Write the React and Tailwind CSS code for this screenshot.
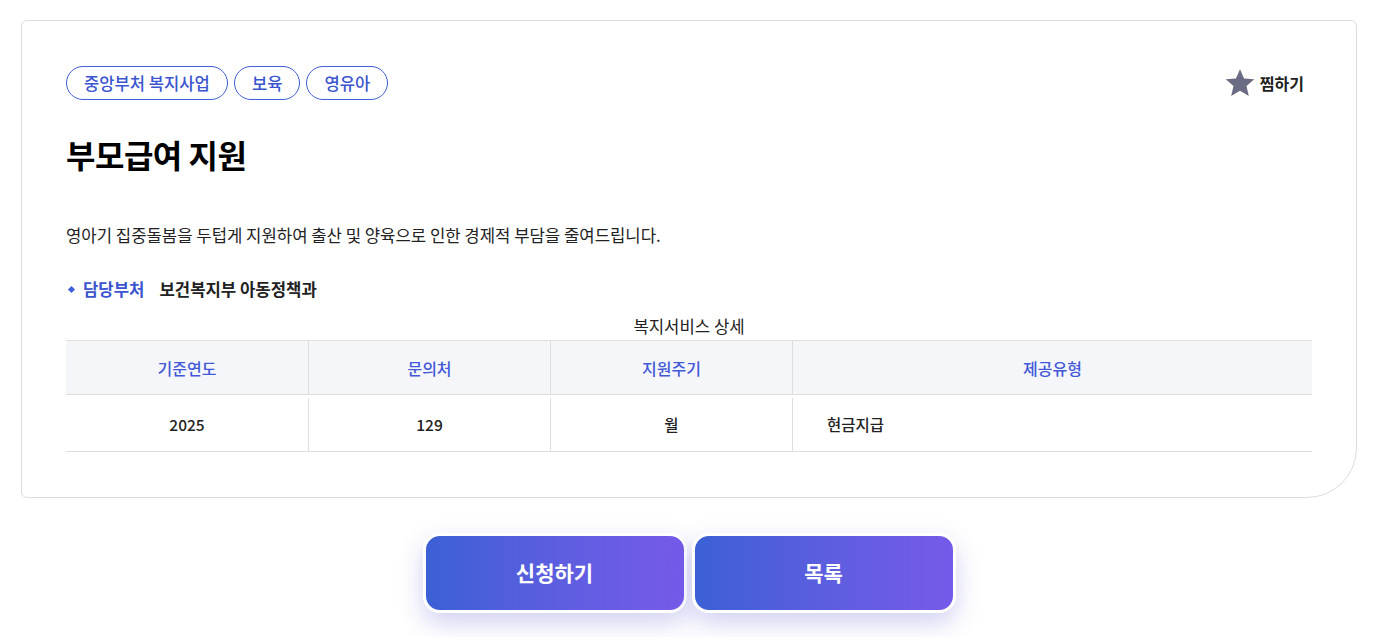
import React from 'react';

const tags = ['중앙부처 복지사업', '보육', '영유아'];

const columns = [
  { label: '기준연도', value: '2025', width: 'w-[242px]', align: 'center' },
  { label: '문의처', value: '129', width: 'w-[242px]', align: 'center' },
  { label: '지원주기', value: '월', width: 'w-[242px]', align: 'center' },
  { label: '제공유형', value: '현금지급', width: 'flex-1', align: 'left' },
];

const StarIcon = () => (
  <svg width="32" height="32" viewBox="0 0 24 24" className="text-[#696c82]">
    <path
      fill="currentColor"
      d="M12 1.6l3.05 7.02 7.6.66-5.77 5.02 1.73 7.44L12 17.8l-6.61 3.94 1.73-7.44-5.77-5.02 7.6-.66z"
    />
  </svg>
);

const App = () => {
  return (
    <div
      className="min-h-screen bg-white pt-[20px] text-[#111]"
      style={{ fontFamily: '"Noto Sans CJK KR", "Noto Sans", sans-serif' }}
    >
      <div className="ml-[21px] w-[1336px]">
        {/* Detail card */}
        <div className="border border-[#dcdcdc] rounded-tl-[6px] rounded-tr-[6px] rounded-bl-[6px] rounded-br-[50px] px-[44px] pt-[45px] pb-[45px]">
          <div className="flex items-center justify-between">
            <div className="flex gap-[6px]">
              {tags.map((tag) => (
                <span
                  key={tag}
                  className="h-[34px] px-[17px] flex items-center rounded-full border border-[#3d5fd8] text-[#3a55cf] text-[16.6px] font-medium"
                >
                  {tag}
                </span>
              ))}
            </div>
            <button className="flex items-center gap-[4px] mr-[8px] text-[16px] font-bold text-[#222]">
              <StarIcon />
              찜하기
            </button>
          </div>

          <h1 className="mt-[34px] text-[32px] leading-[40px] font-bold tracking-[-0.5px] text-black">부모급여 지원</h1>

          <p className="mt-[49px] text-[16.7px] leading-[24px] text-[#222]">
            영아기 집중돌봄을 두텁게 지원하여 출산 및 양육으로 인한 경제적 부담을 줄여드립니다.
          </p>

          <div className="mt-[30px] flex items-center text-[16.7px] leading-[24px] font-semibold">
            <span className="ml-[3px] w-[5px] h-[5px] bg-[#3d5fd8] rotate-45" />
            <span className="ml-[9px] text-[#3a55cf]">담당부처</span>
            <span className="ml-[15px] text-[#222]">보건복지부 아동정책과</span>
          </div>

          <div className="mt-[14px] text-center text-[16.7px] leading-[22px] text-[#222]">복지서비스 상세</div>

          <div className="mt-[3px]">
            <div className="flex bg-[#f5f6fa] border-t border-b border-[#dedede] h-[55px]">
              {columns.map((col, i) => (
                <div
                  key={col.label}
                  className={`${col.width} flex items-center justify-center text-[16px] font-medium text-[#4259d8] ${
                    i > 0 ? 'border-l border-[#dedede]' : ''
                  }`}
                >
                  {col.label}
                </div>
              ))}
            </div>
            <div className="flex border-b border-[#dedede] h-[57px] pt-[3px]">
              {columns.map((col, i) => (
                <div
                  key={col.label}
                  className={`${col.width} flex items-center text-[15.5px] font-medium text-[#222] ${
                    col.align === 'center' ? 'justify-center' : 'pl-[34px]'
                  } ${i > 0 ? 'border-l border-[#dedede]' : ''}`}
                >
                  {col.value}
                </div>
              ))}
            </div>
          </div>
        </div>

        {/* Actions */}
        <div className="mt-[35px] flex justify-center gap-[5px]">
          <button className="w-[264px] h-[80px] rounded-[17px] border-[3px] border-white bg-gradient-to-r from-[#3b60d6] to-[#765ae9] text-white text-[21px] font-bold shadow-[0_10px_24px_rgba(90,90,210,0.28)]">
            신청하기
          </button>
          <button className="w-[264px] h-[80px] rounded-[17px] border-[3px] border-white bg-gradient-to-r from-[#3b60d6] to-[#765ae9] text-white text-[21px] font-bold shadow-[0_10px_24px_rgba(90,90,210,0.28)]">
            목록
          </button>
        </div>
      </div>
    </div>
  );
};

export default App;
